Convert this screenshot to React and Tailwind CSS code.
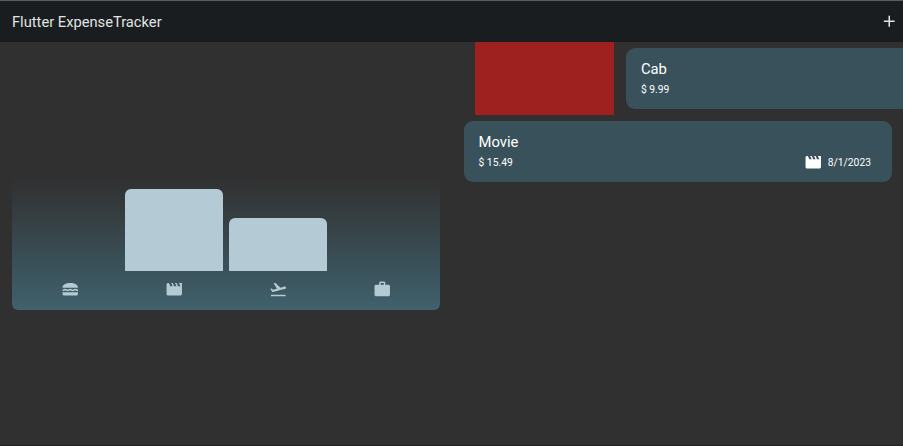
import { MdAdd, MdFlightTakeoff, MdLunchDining, MdMovie, MdWork } from 'react-icons/md';

const buckets = [
  { name: 'food', Icon: MdLunchDining, height: 0 },
  { name: 'leisure', Icon: MdMovie, height: 82.5 },
  { name: 'travel', Icon: MdFlightTakeoff, height: 53 },
  { name: 'work', Icon: MdWork, height: 0 },
];

function Chart() {
  return (
    <div className="flex h-[132px] w-[428px] flex-col rounded-[6px] bg-linear-to-t from-[#40616d] to-[#40616d]/0 px-[6px] pt-[11px]">
      <div className="flex h-[82.5px] items-end">
        {buckets.map(({ name, height }) => (
          <div key={name} className="flex flex-1 items-end px-[3px]">
            <div className="w-full rounded-t-[6px] bg-[#b4cad5]" style={{ height }} />
          </div>
        ))}
      </div>
      <div className="mt-[9px] flex">
        {buckets.map(({ name, Icon }) => (
          <div key={name} className="flex flex-1 justify-center pl-[1.4px] text-[#b4cad5]">
            <Icon size={18.5} />
          </div>
        ))}
      </div>
    </div>
  );
}

function ExpenseCard({ title, amount, Icon, date }) {
  return (
    <div className="flex h-[61px] w-[428px] shrink-0 flex-col rounded-[9px] bg-[#39515b] pl-[14.5px] pr-[21px] pt-[11px] text-white">
      <h2 className="text-[14.8px] leading-[20px]">{title}</h2>
      <div className="flex h-[19px] items-center justify-between text-[10.3px] leading-[13px]">
        <span className="pt-[1px]">{amount}</span>
        {date && (
          <span className="flex items-center gap-[5px]">
            <Icon size={18.5} />
            <span className="pt-[1px]">{date}</span>
          </span>
        )}
      </div>
    </div>
  );
}

export default function App() {
  return (
    <div className="flex h-[446px] w-[903px] flex-col overflow-hidden border-b border-[#252425] bg-[#303030] font-['Roboto',sans-serif]">
      <header className="flex h-[42px] shrink-0 items-center justify-between border-t border-[#5b605f] bg-[#191d1f] pl-[12px] pr-[5px] text-[#e1e3e4]">
        <h1 className="pt-[2px] text-[14.7px]">Flutter ExpenseTracker</h1>
        <MdAdd size={18.5} />
      </header>
      <main className="flex min-h-0 flex-1">
        <section className="flex w-[452px] shrink-0 items-center pl-[11.6px]">
          <Chart />
        </section>
        <section className="flex w-[451px] flex-col overflow-hidden">
          <div className="flex h-[73px] shrink-0">
            <div className="ml-[23.4px] w-[139px] shrink-0 bg-[#9e201f]" />
            <div className="ml-[12px] pt-[6px]">
              <ExpenseCard title="Cab" amount="$ 9.99" />
            </div>
          </div>
          <div className="pl-[12px] pt-[6.3px]">
            <ExpenseCard title="Movie" amount="$ 15.49" Icon={MdMovie} date="8/1/2023" />
          </div>
        </section>
      </main>
    </div>
  );
}
